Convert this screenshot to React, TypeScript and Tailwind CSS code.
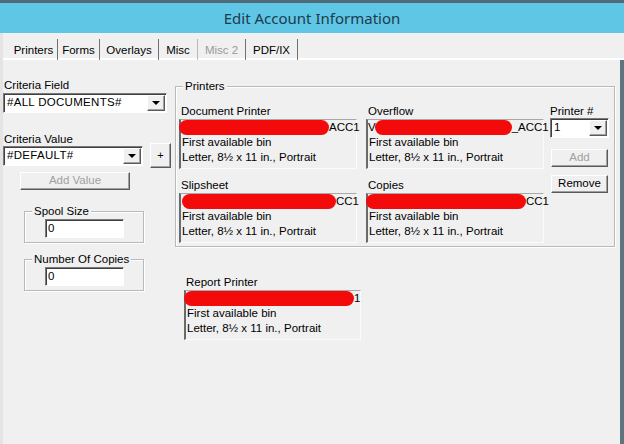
import React from "react";

const sunken =
  "border border-t-[#7a7a7a] border-l-[#7a7a7a] border-r-white border-b-white shadow-[inset_1px_1px_0_#404040]";
const raised =
  "border border-t-white border-l-white border-r-[#5a5a5a] border-b-[#5a5a5a] shadow-[inset_-1px_-1px_0_#a0a0a0]";
const etched = "border border-[#b9b9b9] shadow-[inset_1px_1px_0_#ffffff,1px_1px_0_#ffffff]";

const Arrow = () => (
  <div className={`${raised} bg-[#f0f0f0] w-[18px] h-[16px] flex items-center justify-center shrink-0`}>
    <div className="w-0 h-0 border-l-[4px] border-r-[4px] border-t-[4px] border-l-transparent border-r-transparent border-t-black" />
  </div>
);

const Combo = ({value, className}: {value: string; className: string}) => (
  <div className={`${sunken} bg-white h-[20px] flex items-center justify-between pl-[3px] pr-[1px] ${className}`}>
    <span className="tracking-[0.3px]">{value}</span>
    <Arrow />
  </div>
);

type BoxProps = {
  label: string;
  prefix?: string;
  red: string;
  suffix: string;
  width?: string;
};

const PrinterBox = ({label, prefix, red, suffix, width = "w-[178px]"}: BoxProps) => (
  <div className={width}>
    <div className="h-[15px] leading-[15px] pl-[2px]">{label}</div>
    <div className="h-[50px] border-l-2 border-t border-r border-b border-l-[#6a6a6a] border-t-[#a8a8a8] border-r-[#fbfbfb] border-b-[#fbfbfb]">
      <div className="h-[15px] flex items-center leading-[15px]">
        {prefix && <span>{prefix}</span>}
        <div className={`h-[15px] bg-[#f30b0b] rounded-full shrink-0 ${red}`} />
        <span className="ml-auto pr-[1px]">{suffix}</span>
      </div>
      <div className="leading-[15px] pl-[1px]">First available bin</div>
      <div className="leading-[15px] pl-[1px]">Letter, 8½ x 11 in., Portrait</div>
    </div>
  </div>
);

const tabs = [
  {name: "Printers", w: "w-[48px]", sep: "border-r-[#707070]", text: "text-black"},
  {name: "Forms", w: "w-[42px]", sep: "border-r-[#707070]", text: "text-black"},
  {name: "Overlays", w: "w-[59px]", sep: "border-r-[#707070]", text: "text-black"},
  {name: "Misc", w: "w-[39px]", sep: "border-r-[#b8b8b8]", text: "text-black"},
  {name: "Misc 2", w: "w-[48px]", sep: "border-r-[#707070]", text: "text-[#9a9a9a]"},
  {name: "PDF/IX", w: "w-[52px]", sep: "border-r-[#707070]", text: "text-black"},
];

const App = () => {
  return (
    <div className="w-[624px] h-[444px] overflow-hidden flex flex-col bg-[#f0f0f0] text-[11.5px] text-black font-['Liberation_Sans',Arial,sans-serif]">
      <div className="h-[3px] bg-[#4f6b79]" />
      <div className="h-[30px] bg-[#60c6e6] flex items-center justify-center">
        <span className="text-[15px] text-[#1c3b4c] font-['Noto_Sans',sans-serif] pt-[1px]">Edit Account Information</span>
      </div>

      {/* tab strip */}
      <div className="h-[27px] flex items-end pl-[7px] border-l-[3px] border-[#e4e4e4] shadow-[inset_0_-2px_0_#ffffff]">
        {tabs.map((t) => (
          <div
            key={t.name}
            className={`${t.w} ${t.text} ${t.sep} h-[21px] border-r-[1.5px] flex items-center justify-center pt-[3px]`}
          >
            {t.name}
          </div>
        ))}
      </div>

      <div className="flex-1 flex border-l-[3px] border-l-[#e4e4e4] border-r-4 border-r-[#5f747f]">
        {/* left column */}
        <div className="w-[172px] pt-[18px] flex flex-col">
          <div className="h-[15px] leading-[15px] pl-[1px]">Criteria Field</div>
          <Combo value="#ALL DOCUMENTS#" className="w-[164px]" />
          <div className="h-[12px] leading-[12px] mt-[20px] pl-[1px]">Criteria Value</div>
          <div className="flex items-start mt-[-2px]">
            <Combo value="#DEFAULT#" className="w-[140px] mt-[3px]" />
            <div className={`${raised} w-[21px] h-[25px] ml-[7px] flex items-center justify-center text-[11px]`}>+</div>
          </div>
          <div className={`${raised} w-[110px] h-[18px] ml-[17px] mt-[4px] flex items-center justify-center text-[#a0a0a0]`}>
            Add Value
          </div>

          <div className={`${etched} relative w-[120px] h-[32px] ml-[21px] mt-[21px] pt-[7px] pl-[20px]`}>
            <span className="absolute left-[7px] top-[-8px] px-[2px] bg-[#f0f0f0] leading-[14px]">Spool Size</span>
            <div className={`${sunken} bg-white w-[79px] h-[19px] pl-[2px] leading-[17px]`}>0</div>
          </div>

          <div className={`${etched} relative w-[120px] h-[32px] ml-[21px] mt-[16px] pt-[7px] pl-[20px]`}>
            <span className="absolute left-[7px] top-[-8px] px-[2px] bg-[#f0f0f0] leading-[14px]">Number Of Copies</span>
            <div className={`${sunken} bg-white w-[79px] h-[19px] pl-[2px] leading-[17px]`}>0</div>
          </div>
        </div>

        {/* right side */}
        <div className="flex flex-col pt-[26px]">
          <div className={`${etched} relative w-[440px] h-[161px] pt-[17px] pl-[3px] flex`}>
            <span className="absolute left-[7px] top-[-8px] px-[2px] bg-[#f0f0f0] leading-[14px]">Printers</span>

            <div className="flex flex-col gap-[9px]">
              <PrinterBox label="Document Printer" red="w-[150px] -ml-[2px]" suffix="ACC1" />
              <PrinterBox label="Slipsheet" red="w-[154px] ml-[1px]" suffix="CC1" />
            </div>

            <div className="flex flex-col gap-[9px] ml-[9px]">
              <PrinterBox label="Overflow" prefix="V" red="w-[137px] ml-[-1px]" suffix="_ACC1" />
              <PrinterBox label="Copies" red="w-[160px] -ml-[2px] -mt-[1px]" suffix="CC1" />
            </div>

            <div className="flex flex-col w-[59px] ml-[6px]">
              <div className="h-[14px] leading-[14px]">Printer #</div>
              <Combo value="1" className="w-[59px]" />
              <div className={`${raised} h-[18px] mt-[11px] mx-[1px] flex items-center justify-center text-[#a0a0a0]`}>Add</div>
              <div className={`${raised} h-[18px] mt-[8px] mx-[1px] flex items-center justify-center`}>Remove</div>
            </div>
          </div>

          <div className="mt-[28px] ml-[9px]">
            <PrinterBox label="Report Printer" red="w-[170px] -ml-[2px]" suffix="1" width="w-[177px]" />
          </div>
        </div>
      </div>
    </div>
  );
};

export default App;
